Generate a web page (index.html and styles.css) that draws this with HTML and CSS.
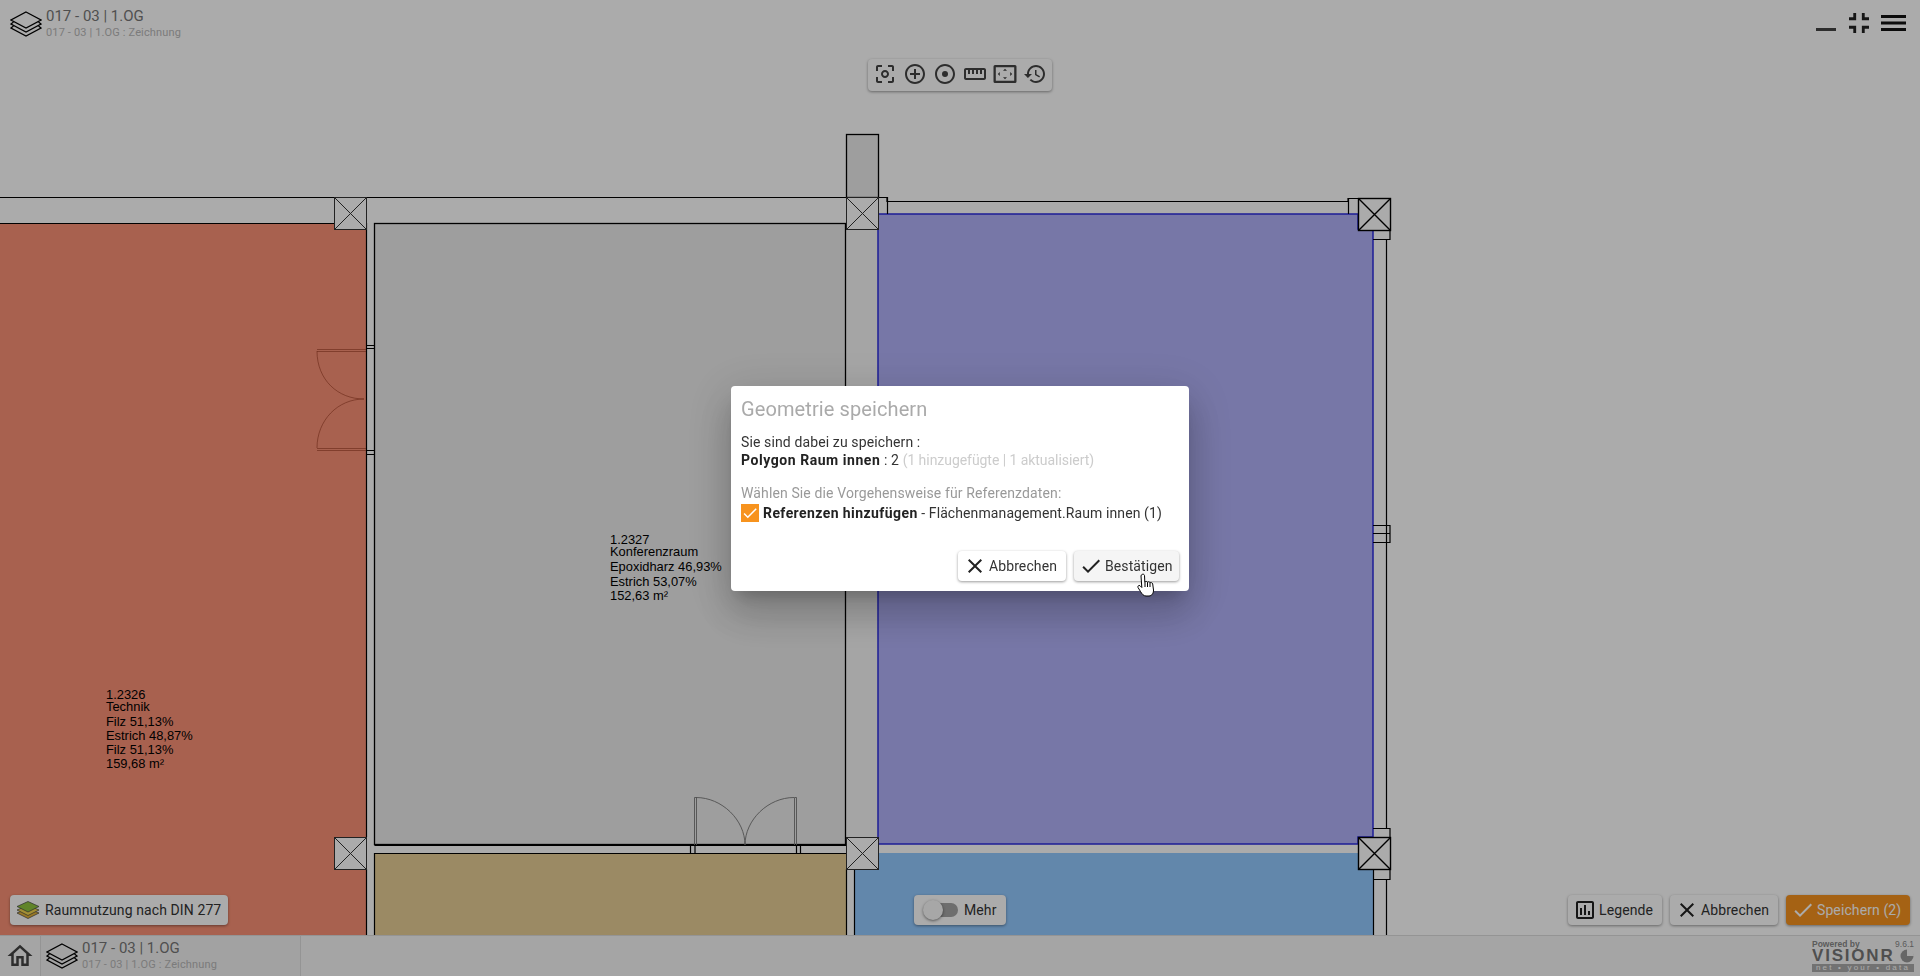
FILE: index.html
```html
<!DOCTYPE html>
<html lang="de">
<head>
<meta charset="utf-8">
<title>Geometrie speichern</title>
<link rel="stylesheet" href="styles.css">
</head>
<body>
<svg class="defs" width="0" height="0" aria-hidden="true">
  <symbol id="layers" viewBox="0 0 32 26">
    <path class="ln" d="M16 1 31 9 16 17 1 9Z"/>
    <path class="ln" d="M3.500 11 1 13 16 21 31 13 28.500 11"/>
    <path class="ln" d="M3.500 15 1 17 16 25 31 17 28.500 15"/>
  </symbol>
  <symbol id="i-close" viewBox="0 0 24 24"><path d="M19 6.41 17.59 5 12 10.59 6.41 5 5 6.41 10.59 12 5 17.59 6.41 19 12 13.41 17.59 19 19 17.59 13.41 12z"/></symbol>
  <symbol id="i-check" viewBox="0 0 24 24"><path d="M9 16.17 4.83 12l-1.42 1.41L9 19 21 7l-1.41-1.41z"/></symbol>
</svg>

<main class="stage">
  <svg class="plan" viewBox="0 0 1920 935" width="1920" height="935">
    <!-- rooms -->
    <rect class="wall" x="0" y="197" width="334" height="26"/>
    <rect class="wall" x="366" y="197" width="480" height="26"/>
    <rect class="wall" x="366" y="223" width="8" height="712"/>
    <rect class="wall-dim" x="846" y="229" width="32" height="608"/>
    <rect class="room-red" x="0" y="223" width="366" height="712"/>
    <rect class="room-grey" x="374.5" y="223.5" width="471" height="621"/>
    <rect class="room-tan" x="374" y="853" width="472" height="82"/>
    <polygon class="room-blue" points="878,853 1358,853 1358,869 1373,869 1373,935 854,935 854,869 878,869"/>
    <rect class="room-grey" x="846.5" y="134.5" width="32" height="63"/>
    <polygon class="room-purple" points="878,214 1358,214 1358,229 1373,229 1373,837 1358,837 1358,844 878,844"/>

    <!-- walls -->
    <path class="ln" d="M0 197.500H334M366 197.500H846M0 223.500H366M374.500 845.500H846M374.500 853.500H846M846.500 869V935M854.500 869V935M1373.500 869V935M1386.500 239V828M1386.500 879V935M846 197.500H887V201.500H1348V198.500H1358M1348.500 198V214M366.500 223V837M366.500 869V935M374.500 853V935"/>
    <path class="ln" d="M1373 230.500H1390V239.500H1373M1373 869.500H1390V879.500H1373M1373 828.500H1390V837M1390 828V837"/>
    <path class="ln" d="M1373 525.500H1390V542.500H1373M1373 533.500H1390"/>
    <path class="ln" d="M887.500 197V214"/>

    <!-- columns -->
    <g class="col">
      <rect x="334.500" y="197.500" width="32" height="32"/><path d="M334.500 197.500 366.500 229.500M366.500 197.500 334.500 229.500"/>
      <rect x="334.500" y="837.500" width="32" height="32"/><path d="M334.500 837.500 366.500 869.500M366.500 837.500 334.500 869.500"/>
      <rect x="846.500" y="197.500" width="32" height="32"/><path d="M846.500 197.500 878.500 229.500M878.500 197.500 846.500 229.500"/>
      <rect x="846.500" y="837.500" width="32" height="32"/><path d="M846.500 837.500 878.500 869.500M878.500 837.500 846.500 869.500"/>
    </g>
    <g class="col col-strong">
      <rect x="1358.500" y="198.500" width="32" height="32"/><path d="M1358.500 198.500 1390.500 230.500M1390.500 198.500 1358.500 230.500"/>
      <rect x="1358.500" y="837.500" width="32" height="32"/><path d="M1358.500 837.500 1390.500 869.500M1390.500 837.500 1358.500 869.500"/>
    </g>

    <!-- doors -->
    <g class="door-red">
      <path d="M317 349.500H366M317 351.500H366M317 351C317 380 338 399 364 399M317 448C317 420 338 399 364 399M317 448.500H366M317 450.500H366"/>
      <path class="ln" d="M366 345.500H374M366 348.500H374M366 450.500H374M366 454.500H374"/>
    </g>
    <g class="door-grey">
      <path d="M694.500 845V797.500H696.500V845M794.500 845V797.500H796.500V845M696 797.500C722 797.500 745 820 745 845M794 797.500C768 797.500 745 820 745 845"/>
    </g>
    <path class="ln" d="M690.500 845V853M695 845V853M796.500 845V853M800.500 845V853"/>

    <!-- labels -->
    <g class="plan-label">
      <text x="610" y="544">1.2327</text>
      <text x="610" y="556">Konferenzraum</text>
      <text x="610" y="571">Epoxidharz 46,93%</text>
      <text x="610" y="586">Estrich 53,07%</text>
      <text x="610" y="600">152,63 m²</text>
      <text x="106" y="699">1.2326</text>
      <text x="106" y="711">Technik</text>
      <text x="106" y="726">Filz 51,13%</text>
      <text x="106" y="740">Estrich 48,87%</text>
      <text x="106" y="754">Filz 51,13%</text>
      <text x="106" y="768">159,68 m²</text>
    </g>
  </svg>

  <div class="stage-ui">
    <header class="top">
      <div class="doc doc-top">
        <svg class="doc-icon"><use href="#layers"/></svg>
        <div class="doc-text">
          <div class="doc-title">017 - 03 | 1.OG</div>
          <div class="doc-sub">017 - 03 | 1.OG : Zeichnung</div>
        </div>
      </div>
      <div class="toolbar">
        <svg class="tool" viewBox="0 0 24 24"><path d="M5 15H3v4c0 1.100.9 2 2 2h4v-2H5v-4zM5 5h4V3H5c-1.100 0-2 .9-2 2v4h2V5zm14-2h-4v2h4v4h2V5c0-1.100-.9-2-2-2zm0 16h-4v2h4c1.100 0 2-.9 2-2v-4h-2v4zM12 8c-2.210 0-4 1.790-4 4s1.790 4 4 4 4-1.790 4-4-1.790-4-4-4zm0 6c-1.100 0-2-.9-2-2s.9-2 2-2 2 .9 2 2-.9 2-2 2z"/></svg>
        <svg class="tool" viewBox="0 0 24 24"><path d="M13 7h-2v4H7v2h4v4h2v-4h4v-2h-4V7zm-1-5C6.480 2 2 6.480 2 12s4.480 10 10 10 10-4.480 10-10S17.520 2 12 2zm0 18c-4.410 0-8-3.590-8-8s3.590-8 8-8 8 3.590 8 8-3.590 8-8 8z"/></svg>
        <svg class="tool" viewBox="0 0 24 24"><circle cx="12" cy="12" r="3"/><path d="M12 2C6.480 2 2 6.480 2 12s4.480 10 10 10 10-4.480 10-10S17.520 2 12 2zm0 18c-4.420 0-8-3.580-8-8s3.580-8 8-8 8 3.580 8 8-3.580 8-8 8z"/></svg>
        <svg class="tool" viewBox="0 0 24 24"><path d="M21 6H3c-1.100 0-2 .9-2 2v8c0 1.100.9 2 2 2h18c1.100 0 2-.9 2-2V8c0-1.100-.9-2-2-2zm0 10H3V8h2v4h2V8h2v4h2V8h2v4h2V8h2v4h2V8h2v8z"/></svg>
        <svg class="tool" viewBox="0 0 24 24"><path d="M2 3h20a1.500 1.500 0 0 1 1.500 1.500v15a1.500 1.500 0 0 1-1.500 1.500H2a1.500 1.500 0 0 1-1.500-1.500v-15A1.500 1.500 0 0 1 2 3zm.8 2.300v13.400h18.400V5.300zM12 6.800l2 2h-4zM12 17.200l-2-2h4zM4.800 12l2-2v4zM19.200 12l-2 2v-4z"/></svg>
        <svg class="tool" viewBox="0 0 24 24"><path d="M13 3c-4.970 0-9 4.030-9 9H1l3.890 3.890.07.14L9 12H6c0-3.870 3.130-7 7-7s7 3.130 7 7-3.130 7-7 7c-1.930 0-3.680-.79-4.940-2.060l-1.420 1.420C8.270 19.990 10.510 21 13 21c4.970 0 9-4.030 9-9s-4.030-9-9-9zm-1 5v5l4.280 2.540.72-1.210-3.500-2.080V8H12z"/></svg>
      </div>
      <div class="win-actions">
        <svg class="win-min" viewBox="0 0 20 3"><rect width="20" height="3"/></svg>
        <svg class="win-exit" viewBox="5 5 14 14"><path d="M5 16h3v3h2v-5H5v2zm3-8H5v2h5V5H8v3zm6 11h2v-3h3v-2h-5v5zm2-11V5h-2v5h5V8h-3z"/></svg>
        <svg class="win-menu" viewBox="0 0 25 16"><path d="M0 0h25v3H0zM0 6.500h25v3H0zM0 13h25v3H0z"/></svg>
      </div>
    </header>

    <div class="bottom">
      <div class="bottom-left">
        <button class="chip chip-layer">
          <svg class="layer-icon" viewBox="0 0 24 18">
            <path class="lay-c" d="M12 7.500 23 12 12 17.500 1 12Z"/>
            <path class="lay-b" d="M12 4.500 23 9 12 14.500 1 9Z"/>
            <path class="lay-a" d="M12 .5 23 5.500 12 11 1 5.500Z"/>
          </svg>
          Raumnutzung nach DIN 277
        </button>
      </div>
      <button class="chip chip-more">
        <span class="toggle"><span class="toggle-thumb"></span></span>
        Mehr
      </button>
      <div class="bottom-right">
        <button class="chip chip-legend"><svg class="btn-icon" viewBox="0 0 24 24"><path d="M19 3H5c-1.100 0-2 .9-2 2v14c0 1.100.9 2 2 2h14c1.100 0 2-.9 2-2V5c0-1.100-.9-2-2-2zm0 16H5V5h14v14zM7 10h2v7H7zm4-3h2v10h-2zm4 6h2v4h-2z"/></svg>Legende</button>
        <button class="chip chip-cancel"><svg class="btn-icon"><use href="#i-close"/></svg>Abbrechen</button>
        <button class="chip chip-save"><svg class="btn-icon"><use href="#i-check"/></svg>Speichern (2)</button>
      </div>
    </div>
  </div>
</main>

<footer class="taskbar">
  <div class="home">
    <svg class="home-icon" viewBox="0 0 24 24"><path d="M12 5.690l5 4.500V18h-2v-6H9v6H7v-7.810l5-4.500M12 3 2 12h3v8h6v-6h2v6h6v-8h3L12 3z"/></svg>
  </div>
  <div class="doc doc-tab">
    <svg class="doc-icon"><use href="#layers"/></svg>
    <div class="doc-text">
      <div class="doc-title">017 - 03 | 1.OG</div>
      <div class="doc-sub">017 - 03 | 1.OG : Zeichnung</div>
    </div>
  </div>
  <div class="brand">
    <div class="brand-top"><span>Powered by</span><span class="brand-ver">9.6.1</span></div>
    <div class="brand-main"><span class="brand-name">VISIONR</span>
      <svg class="brand-pie" viewBox="0 0 14 14"><circle cx="7" cy="7" r="6.500"/><path class="pie-cut" d="M7 7V0A7 7 0 0 1 14 7Z"/></svg>
    </div>
    <div class="brand-strip">net • your • data</div>
  </div>
</footer>

<div class="backdrop">
  <section class="modal">
    <h2 class="modal-title">Geometrie speichern</h2>
    <p class="modal-line">Sie sind dabei zu speichern :</p>
    <p class="modal-line"><b>Polygon Raum innen</b> : 2 <span class="muted">(1 hinzugefügte | 1 aktualisiert)</span></p>
    <p class="modal-line modal-hint">Wählen Sie die Vorgehensweise für Referenzdaten:</p>
    <div class="modal-check">
      <span class="checkbox"><svg viewBox="0 0 24 24"><path d="M9 16.170 4.830 12l-1.420 1.410L9 19 21 7l-1.410-1.410z"/></svg></span>
      <span class="check-label"><b>Referenzen hinzufügen</b> - Flächenmanagement.Raum innen (1)</span>
    </div>
    <div class="modal-actions">
      <button class="chip chip-cancel"><svg class="btn-icon"><use href="#i-close"/></svg>Abbrechen</button>
      <button class="chip chip-hover"><svg class="btn-icon"><use href="#i-check"/></svg>Bestätigen</button>
    </div>
    <svg class="hand" viewBox="0 0 18 24"><path d="M5 1.500C6 .8 7.300 1.300 7.500 2.500L7.800 9C8.600 8.200 10 8.300 10.500 9.200 11.300 8.500 12.800 8.800 13 9.800 13.900 9.200 15.500 9.700 15.700 11L16.500 17C16.600 20 15 23 12 23H9C6.500 23 5 21 3.500 18.500L1 14.500C.4 13.300 1.800 11.800 3 12.700L4.800 14.500 4 3C4 2.300 4.400 1.800 5 1.500Z"/><path d="M8 9V14M10.500 9.300V14M13 10V14"/></svg>
  </section>
</div>
</body>
</html>
```

FILE: styles.css
```css
* { box-sizing: border-box; }
html, body { margin: 0; height: 100%; }
body {
  width: 1920px;
  height: 976px;
  overflow: hidden;
  display: flex;
  flex-direction: column;
  background: #fff;
  font-family: Roboto, "Liberation Sans", sans-serif;
  font-size: 14px;
  color: #333;
}
.defs { position: absolute; }

/* canvas */
.stage { position: relative; height: 935px; flex: none; overflow: hidden; }
.plan { position: absolute; left: 0; top: 0; display: block; }
.wall { fill: #fff; }
.wall-dim { fill: #f7f7f7; }
.room-red { fill: #fb9176; }
.room-grey { fill: #ececec; stroke: #000; stroke-width: 1.300; }
.room-tan { fill: #e7ce95; }
.room-blue { fill: #92c9ff; }
.room-purple { fill: #b2b2f9; stroke: #2d2de0; stroke-width: 1.500; }
.ln { fill: none; stroke: #000; stroke-width: 1.200; }
.col rect { fill: #fff; stroke: #333; stroke-width: 1; }
.col path { fill: none; stroke: #333; stroke-width: 1; }
.col-strong rect, .col-strong path { stroke: #000; stroke-width: 1.400; }
.door-red path { fill: none; stroke: #9a3a22; stroke-width: .6; }
.door-red .ln { stroke: #000; stroke-width: 1; }
.door-grey path { fill: none; stroke: #777; stroke-width: .9; }
.plan-label { font-family: "Liberation Sans", Arial, sans-serif; font-size: 12.900px; fill: #000; }

/* overlay UI */
.stage-ui {
  position: absolute;
  inset: 0;
  display: flex;
  flex-direction: column;
  justify-content: space-between;
}
.top {
  display: grid;
  grid-template-columns: 1fr auto 1fr;
  align-items: start;
}
.doc { display: flex; align-items: center; }
.doc-top { padding: 8px 0 0 10px; gap: 4px; }
.doc-icon { width: 32px; height: 26px; flex: none; }
.doc-text { display: flex; flex-direction: column; }
.doc-title { font-size: 15px; line-height: 17px; color: #777; }
.doc-sub { font-size: 11px; line-height: 14px; color: #b8b8b8; letter-spacing: .15px; margin-top: 1px; }
.toolbar {
  margin-top: 59px;
  width: 184px;
  height: 32px;
  padding: 0 5px 2px;
  display: flex;
  align-items: center;
  justify-content: space-between;
  background: #fff;
  border-radius: 4px;
  box-shadow: 0 1px 3px rgba(0,0,0,.4);
}
.tool { width: 24px; height: 24px; fill: #444; flex: none; }
.win-actions { display: flex; justify-self: end; padding: 13px 14px 0 0; align-items: flex-start; }
.win-min { width: 20px; height: 3px; margin: 15px 13px 0 0; fill: #444; }
.win-exit { width: 20px; height: 20px; margin: 0 12px 0 0; fill: #222; }
.win-menu { width: 25px; height: 16px; margin-top: 2px; fill: #111; }

.bottom {
  display: grid;
  grid-template-columns: 1fr auto 1fr;
  align-items: center;
  padding: 0 10px 10px;
}
.bottom-right { display: flex; gap: 8px; justify-content: flex-end; }
.chip {
  display: inline-flex;
  align-items: center;
  height: 30px;
  padding: 0 8px;
  font: inherit;
  letter-spacing: .1px;
  white-space: nowrap;
  color: #333;
  background: #fff;
  border: 0;
  border-radius: 4px;
  box-shadow: 0 1px 3px rgba(0,0,0,.4);
}
.chip-layer { padding: 0 0 0 6px; width: 218px; gap: 5px; }
.layer-icon { width: 24px; height: 18px; flex: none; }
.lay-a { fill: #8fc53f; stroke: #444; stroke-width: .7; }
.lay-b { fill: #f3d64e; stroke: #444; stroke-width: .7; }
.lay-c { fill: #e5b53a; stroke: #444; stroke-width: .7; }
.chip-more { width: 92px; padding-left: 10px; gap: 6px; }
.toggle { position: relative; display: block; width: 34px; height: 14px; flex: none; border-radius: 7px; background: #a4a4a4; }
.toggle-thumb {
  position: absolute;
  left: -1px;
  top: -3px;
  width: 20px;
  height: 20px;
  border-radius: 50%;
  background: #fafafa;
  box-shadow: 0 1px 3px rgba(0,0,0,.5);
}
.btn-icon { width: 24px; height: 24px; flex: none; margin: 0 2px 0 -3px; fill: #222; }
.chip-legend { width: 94px; }
.chip-cancel { width: 108px; }
.chip-save { background: #f7931e; color: #fff; width: 124px; }
.chip-save .btn-icon { fill: #fff; }

/* task bar */
.taskbar {
  height: 41px;
  flex: none;
  display: flex;
  background: #f7f7f7;
  border-top: 1px solid #ddd;
}
.home {
  width: 41px;
  display: flex;
  align-items: center;
  justify-content: center;
  border-right: 1px solid #ddd;
}
.home-icon { width: 30px; height: 30px; fill: #444; }
.doc-tab {
  width: 260px;
  padding-left: 5px;
  gap: 4px;
  background: #f2f2f2;
  border-right: 1px solid #ddd;
}
.brand { margin-left: auto; width: 102px; margin-right: 6px; color: #888; padding-top: 3px; }
.brand-top { display: flex; justify-content: space-between; font: bold 8.500px/10px "Liberation Sans", sans-serif; }
.brand-ver { font-weight: normal; }
.brand-main { display: flex; align-items: center; justify-content: space-between; height: 14px; }
.brand-name { font: bold 17px/14px "Liberation Sans", sans-serif; letter-spacing: 1.800px; color: #777; }
.brand-pie { width: 14px; height: 14px; fill: #999; }
.pie-cut { fill: #f7f7f7; }
.brand-strip {
  margin-top: 1px;
  height: 8px;
  background: #aaa;
  color: #fff;
  font: 8px/8px "Liberation Sans", sans-serif;
  letter-spacing: 2.200px;
  text-align: center;
  white-space: nowrap;
  overflow: hidden;
}

/* dialog */
.backdrop {
  position: fixed;
  inset: 0;
  display: flex;
  align-items: center;
  justify-content: center;
  background: rgba(0,0,0,.33);
}
.modal {
  position: relative;
  width: 458px;
  height: 205px;
  padding: 11px 10px 10px;
  background: #fff;
  border-radius: 4px;
  box-shadow: 0 11px 15px -7px rgba(0,0,0,.2), 0 24px 38px 3px rgba(0,0,0,.14), 0 9px 46px 8px rgba(0,0,0,.12);
  display: flex;
  flex-direction: column;
}
.modal-title { margin: 0 0 12px; font-size: 20px; line-height: 24px; font-weight: 400; letter-spacing: .1px; color: #aaa; }
.modal-line { margin: 0; font-size: 14px; line-height: 18px; letter-spacing: .12px; color: #333; }
.modal-line b { color: #222; letter-spacing: .55px; }
.check-label b { color: #222; letter-spacing: .42px; }
.muted { color: #ccc; letter-spacing: -.05px; }
.modal-hint { margin-top: 15px; color: #999; }
.modal-check { display: flex; align-items: center; gap: 4px; margin-top: 1px; height: 20px; }
.check-label { letter-spacing: .1px; }
.checkbox { display: flex; width: 18px; height: 18px; background: #f7931e; }
.checkbox svg { width: 18px; height: 18px; fill: #fff; }
.modal-actions { margin-top: auto; display: flex; justify-content: flex-end; gap: 8px; }
.chip-hover { background: #f5f5f5; width: 105px; }
.hand {
  position: absolute;
  left: 406px;
  top: 187px;
  width: 18px;
  height: 24px;
  fill: #fff;
  stroke: #000;
  stroke-width: 1;
}
```
